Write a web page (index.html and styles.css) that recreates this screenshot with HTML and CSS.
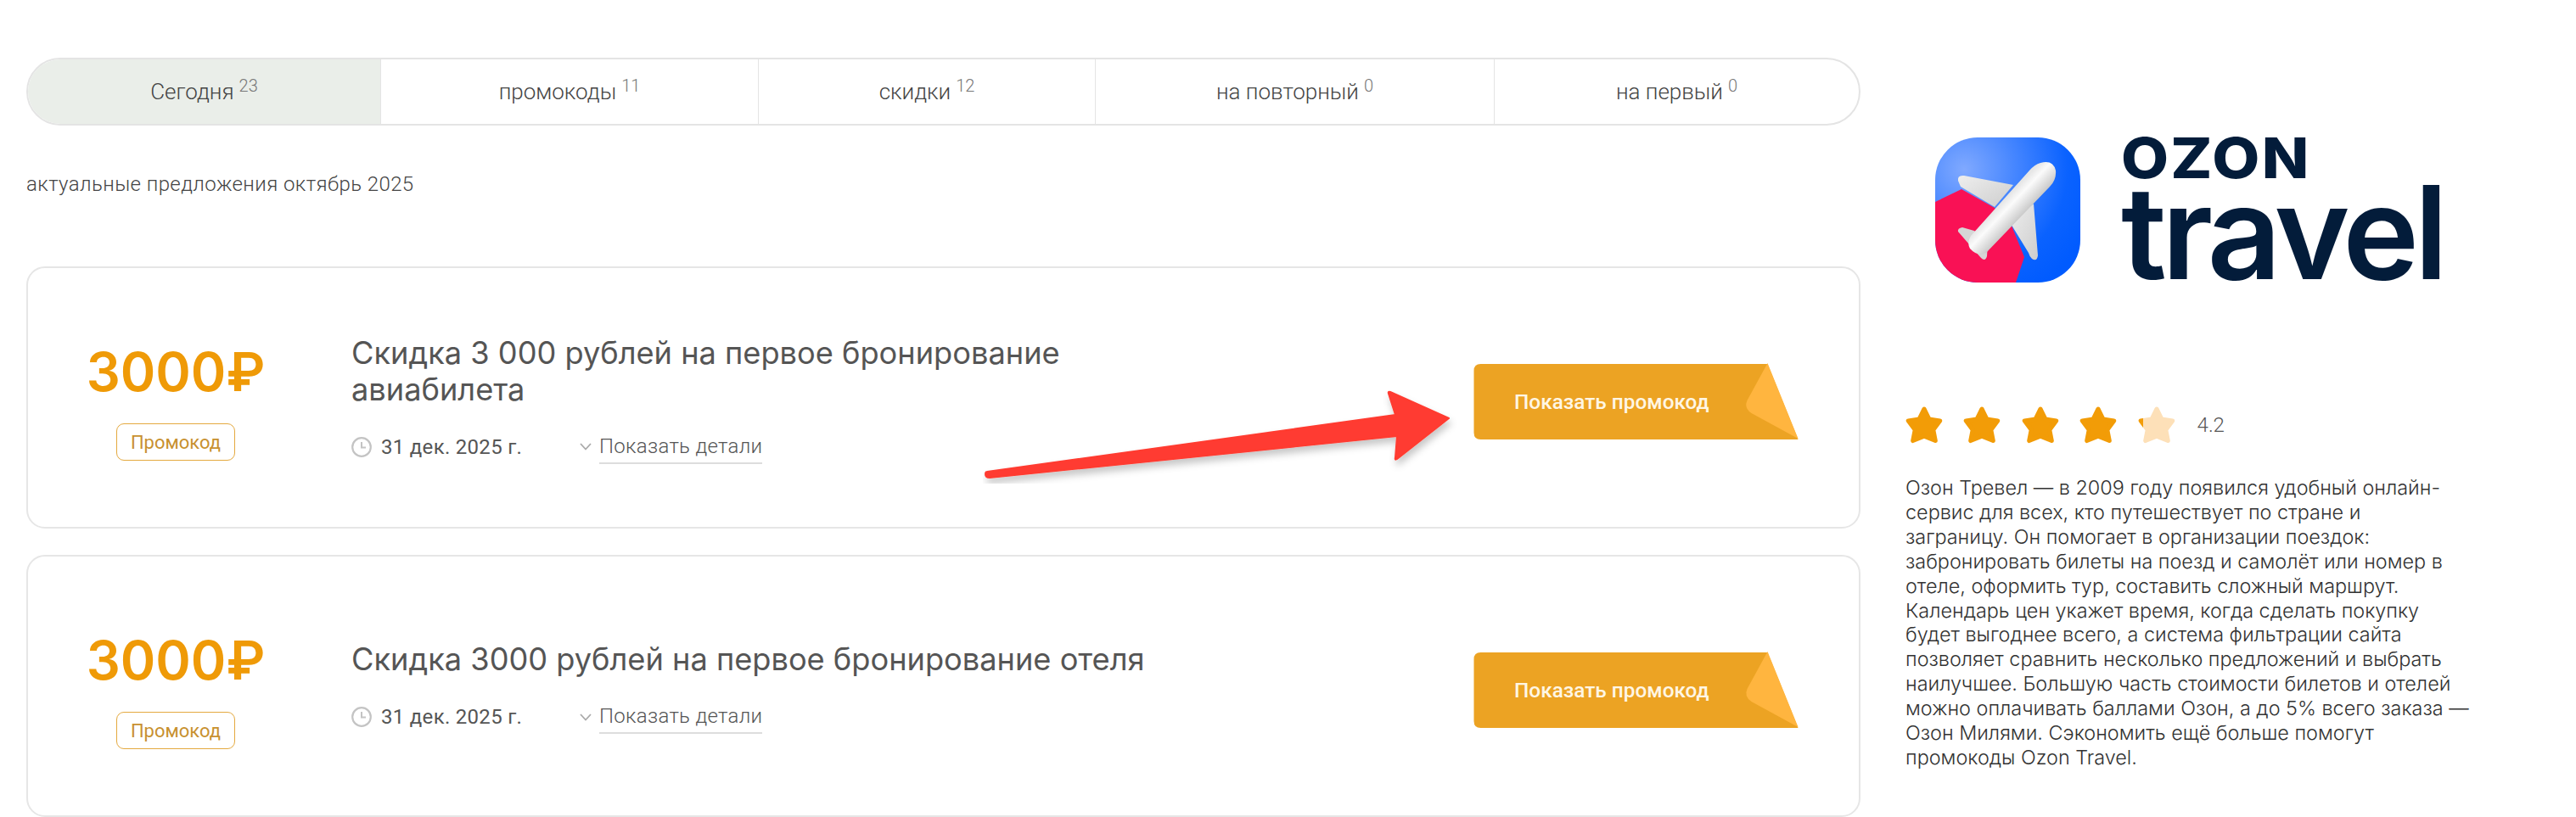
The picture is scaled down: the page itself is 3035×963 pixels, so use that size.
FILE: index.html
```html
<!DOCTYPE html>
<html lang="ru">
<head>
<meta charset="utf-8">
<title>Промокоды Ozon Travel</title>
<link rel="stylesheet" href="styles.css">
</head>
<body>
<svg class="defs" width="0" height="0" aria-hidden="true">
  <defs>
    <symbol id="star" viewBox="0 0 42 42">
      <path d="M21 3 L26.6 14.4 L38.8 16.2 L31.2 26.4 L33.6 38.6 L21 33.4 L8.4 38.6 L10.8 26.4 L3.2 16.2 L15.4 14.4 Z" fill="currentColor" stroke="currentColor" stroke-width="5" stroke-linejoin="round"/>
    </symbol>
    <symbol id="clock" viewBox="0 0 24 24">
      <circle cx="12" cy="12" r="10.8" fill="none" stroke="#c4c4c4" stroke-width="2.2"/>
      <path d="M12 6v6.6h5" fill="none" stroke="#c4c4c4" stroke-width="2"/>
    </symbol>
    <symbol id="chev" viewBox="0 0 14 9">
      <path d="M1 1l6 6.5L13 1" fill="none" stroke="#aaa" stroke-width="1.8"/>
    </symbol>
    <symbol id="fold" viewBox="0 0 382 92">
      <path d="M8 1H346L382 90H8Q0 90 0 82V9Q0 1 8 1Z" fill="#eca323"/>
      <path d="M346 0L382 89L327 59Q318 53 322 44Z" fill="#ffb53f"/>
    </symbol>
  </defs>
</svg>

<div class="page">
  <main class="main">
    <nav class="tabs">
      <a class="tab tab-active">Сегодня<sup>23</sup></a>
      <a class="tab">промокоды<sup>11</sup></a>
      <a class="tab">скидки<sup>12</sup></a>
      <a class="tab">на повторный<sup>0</sup></a>
      <a class="tab">на первый<sup>0</sup></a>
    </nav>
    <p class="subtitle">актуальные предложения октябрь 2025</p>

    <article class="card">
      <div class="deal">
        <div class="price">3000₽</div>
        <span class="badge">Промокод</span>
      </div>
      <div class="info">
        <h2 class="title">Скидка 3 000 рублей на первое бронирование авиабилета</h2>
        <div class="meta">
          <svg class="clock"><use href="#clock"/></svg>
          <span class="date">31 дек. 2025 г.</span>
          <svg class="chev"><use href="#chev"/></svg>
          <span class="details">Показать детали</span>
        </div>
      </div>
      <div class="cta">
        <svg class="cta-bg"><use href="#fold"/></svg>
        <span class="cta-label">Показать промокод</span>
      </div>
    </article>

    <article class="card">
      <div class="deal">
        <div class="price">3000₽</div>
        <span class="badge">Промокод</span>
      </div>
      <div class="info">
        <h2 class="title">Скидка 3000 рублей на первое бронирование отеля</h2>
        <div class="meta">
          <svg class="clock"><use href="#clock"/></svg>
          <span class="date">31 дек. 2025 г.</span>
          <svg class="chev"><use href="#chev"/></svg>
          <span class="details">Показать детали</span>
        </div>
      </div>
      <div class="cta">
        <svg class="cta-bg"><use href="#fold"/></svg>
        <span class="cta-label">Показать промокод</span>
      </div>
    </article>

    <svg class="arrow" viewBox="0 0 570 110" width="570" height="110" aria-hidden="true">
      <defs>
        <filter id="arrow-shadow" x="-5%" y="-20%" width="110%" height="150%">
          <feDropShadow dx="2" dy="6" stdDeviation="4" flood-color="#000" flood-opacity=".22"/>
        </filter>
      </defs>
      <path d="M5 96 L486 29 L478 4 Q477 1 480 2 L549 33 L488 81 Q485 83 486 79 L488 54 L8 103 Q3 103 3 99 Q3 96 5 96Z" fill="#ff3b30" stroke="#ff3b30" stroke-width="2" stroke-linejoin="round" filter="url(#arrow-shadow)"/>
    </svg>
  </main>

  <aside class="side">
    <div class="logo">
      <svg class="logo-icon" viewBox="0 0 171 171" aria-hidden="true">
        <defs>
          <radialGradient id="sky" cx="0.2" cy="0.22" r="0.95">
            <stop offset="0" stop-color="#80a9ff"/>
            <stop offset="0.75" stop-color="#0a62ff"/>
            <stop offset="1" stop-color="#005bff"/>
          </radialGradient>
          <linearGradient id="wing" x1="0" y1="0" x2="1" y2="1">
            <stop offset="0" stop-color="#eeeeee"/>
            <stop offset="1" stop-color="#cdcdcd"/>
          </linearGradient>
          <linearGradient id="body" gradientUnits="userSpaceOnUse" x1="80" y1="75" x2="100" y2="94">
            <stop offset="0" stop-color="#e6e6e6"/>
            <stop offset="0.35" stop-color="#fbfbfb"/>
            <stop offset="1" stop-color="#cbcbcb"/>
          </linearGradient>
          <clipPath id="squircle"><rect width="171" height="171" rx="50"/></clipPath>
        </defs>
        <g clip-path="url(#squircle)">
          <rect width="171" height="171" fill="url(#sky)"/>
          <path d="M0 76L31 61L70 83L90 104L105 141L95 171H0Z" fill="#f91155"/>
        </g>
        <path d="M27 51Q26 44 34 45L92 56L70 82L30 58Z" fill="url(#wing)"/>
        <path d="M116 78L121 139Q120 147 114 143Q111 140 110 136L88 100Z" fill="url(#wing)"/>
        <path d="M27 111Q26 107 32 106L46 110L62 124L61 140Q59 147 54 142Z" fill="#d6d6d6"/>
        <path d="M124 30Q139 26 142 39Q143 50 135 58L60 136Q50 141 41 131Q37 124 42 116L111 39Q117 32 124 30Z" fill="url(#body)"/>
      </svg>
      <div class="logo-text">
        <span class="logo-ozon">OZON</span>
        <span class="logo-travel">travel</span>
      </div>
    </div>

    <div class="rating">
      <svg class="star"><use href="#star"/></svg>
      <svg class="star"><use href="#star"/></svg>
      <svg class="star"><use href="#star"/></svg>
      <svg class="star"><use href="#star"/></svg>
      <span class="star-last">
        <svg class="star star-pale"><use href="#star"/></svg>
        <span class="star-part"><svg class="star"><use href="#star"/></svg></span>
      </span>
      <span class="score">4.2</span>
    </div>

    <p class="about">Озон Тревел — в 2009 году появился удобный онлайн-<br>сервис для всех, кто путешествует по стране и<br>заграницу. Он помогает в организации поездок:<br>забронировать билеты на поезд и самолёт или номер в<br>отеле, оформить тур, составить сложный маршрут.<br>Календарь цен укажет время, когда сделать покупку<br>будет выгоднее всего, а система фильтрации сайта<br>позволяет сравнить несколько предложений и выбрать<br>наилучшее. Большую часть стоимости билетов и отелей<br>можно оплачивать баллами Озон, а до 5% всего заказа —<br>Озон Милями. Сэкономить ещё больше помогут<br>промокоды Ozon Travel.</p>
  </aside>
</div>
</body>
</html>
```
FILE: styles.css
```css
* { box-sizing: border-box; }
html, body { margin: 0; padding: 0; }
body {
  background: #fff;
  font-family: Roboto, "Liberation Sans", sans-serif;
  color: #555;
  overflow: hidden;
  height: 963px;
}
.defs { position: absolute; }
.page {
  display: flex;
  padding: 68px 0 0 31px;
}
.main {
  position: relative;
  width: 2161px;
  flex: none;
}
.tabs {
  display: grid;
  grid-template-columns: 415px 445px 397px 470px 1fr;
  height: 80px;
  border: 2px solid #e4e4e4;
  border-radius: 40px;
  overflow: hidden;
}
.tab {
  display: flex;
  align-items: center;
  justify-content: center;
  font-size: 26px;
  font-weight: 300;
  color: #444;
  border-left: 1px solid #e4e4e4;
}
.tab:first-child { border-left: 0; }
.tab-active { background: #eaeee9; }
.tab sup {
  font-size: 20px;
  line-height: 1;
  margin: -14px 0 0 6px;
  color: #777;
}
.subtitle {
  margin: 53px 0 0;
  font-size: 24px;
  font-weight: 300;
  line-height: 32px;
  color: #444;
  letter-spacing: .42px;
}
.card {
  display: flex;
  align-items: center;
  height: 309px;
  margin-top: 31px;
  border: 2px solid #e6e6e6;
  border-radius: 22px;
  padding-right: 71px;
}
.subtitle + .card { margin-top: 81px; }
.deal {
  display: flex;
  flex-direction: column;
  align-items: center;
  width: 348px;
  padding-top: 6px;
  flex: none;
}
.price {
  font-family: Inter, Roboto, sans-serif;
  font-size: 63px;
  font-weight: 600;
  line-height: 76px;
  color: #ef9a07;
}
.badge {
  margin-top: 23px;
  padding: 0 16px;
  height: 44px;
  display: flex;
  align-items: center;
  font-size: 22px;
  font-weight: 400;
  color: #c8912f;
  border: 1.5px solid #e4a93f;
  border-radius: 9px;
}
.info {
  margin-left: 33px;
  width: 950px;
  padding-top: 4px;
  flex: none;
}
.title {
  margin: 0;
  font-family: Inter, Roboto, sans-serif;
  font-size: 36.2px;
  font-weight: 400;
  line-height: 43px;
  color: #555;
}
.meta {
  display: flex;
  align-items: center;
  margin-top: 26px;
  height: 40px;
}
.clock { width: 24px; height: 24px; flex: none; }
.date {
  margin-left: 11px;
  font-size: 24px;
  font-weight: 400;
  letter-spacing: .3px;
  color: #555;
  width: 234px;
  flex: none;
}
.chev { width: 14px; height: 9px; flex: none; }
.details {
  margin-left: 9px;
  font-size: 24px;
  font-weight: 300;
  letter-spacing: .3px;
  color: #555;
  line-height: 38px;
  border-bottom: 2px solid #ddd;
}
.cta {
  position: relative;
  display: flex;
  align-items: center;
  width: 383px;
  height: 92px;
  margin-left: auto;
  margin-top: 10px;
  padding-left: 48px;
  flex: none;
}
.cta-bg {
  position: absolute;
  inset: 0;
  width: 100%;
  height: 100%;
}
.cta-label {
  position: relative;
  font-size: 24.4px;
  font-weight: 500;
  color: #fff6e4;
}
.arrow {
  position: absolute;
  left: 1127px;
  top: 392px;
}
.side {
  width: 700px;
  flex: none;
  margin-left: 53px;
}
.logo {
  display: flex;
  margin: 94px 0 0 35px;
  height: 171px;
}
.logo-icon { width: 171px; height: 171px; flex: none; }
.logo-text {
  position: relative;
  margin-left: 48px;
  width: 380px;
  color: #031c3a;
  font-family: Inter, Roboto, sans-serif;
}
.logo-ozon {
  position: absolute;
  left: 0;
  top: -9px;
  font-size: 66px;
  font-weight: 800;
  line-height: 66px;
  letter-spacing: 2px;
  transform: scaleX(1.1);
  transform-origin: left center;
}
.logo-travel {
  position: absolute;
  left: 0;
  top: 36px;
  font-size: 152px;
  font-weight: 600;
  line-height: 152px;
  letter-spacing: -5.6px;
}
.rating {
  display: flex;
  align-items: center;
  margin-top: 146px;
  height: 44px;
}
.star {
  display: block;
  width: 44px;
  height: 44px;
  color: #f29c07;
  flex: none;
  margin-right: 24.4px;
}
.star-last {
  position: relative;
  width: 44px;
  flex: none;
}
.star-pale { color: #fde0b8; margin: 0; }
.star-part {
  position: absolute;
  left: 0;
  top: 0;
  width: 6px;
  height: 44px;
  overflow: hidden;
}
.score {
  margin-left: 26px;
  font-size: 24px;
  font-weight: 300;
  color: #555;
}
.about {
  margin: 38px 0 0 0;
  font-family: Inter, Roboto, sans-serif;
  font-size: 23.4px;
  font-weight: 300;
  line-height: 28.9px;
  color: #333;
}
```
